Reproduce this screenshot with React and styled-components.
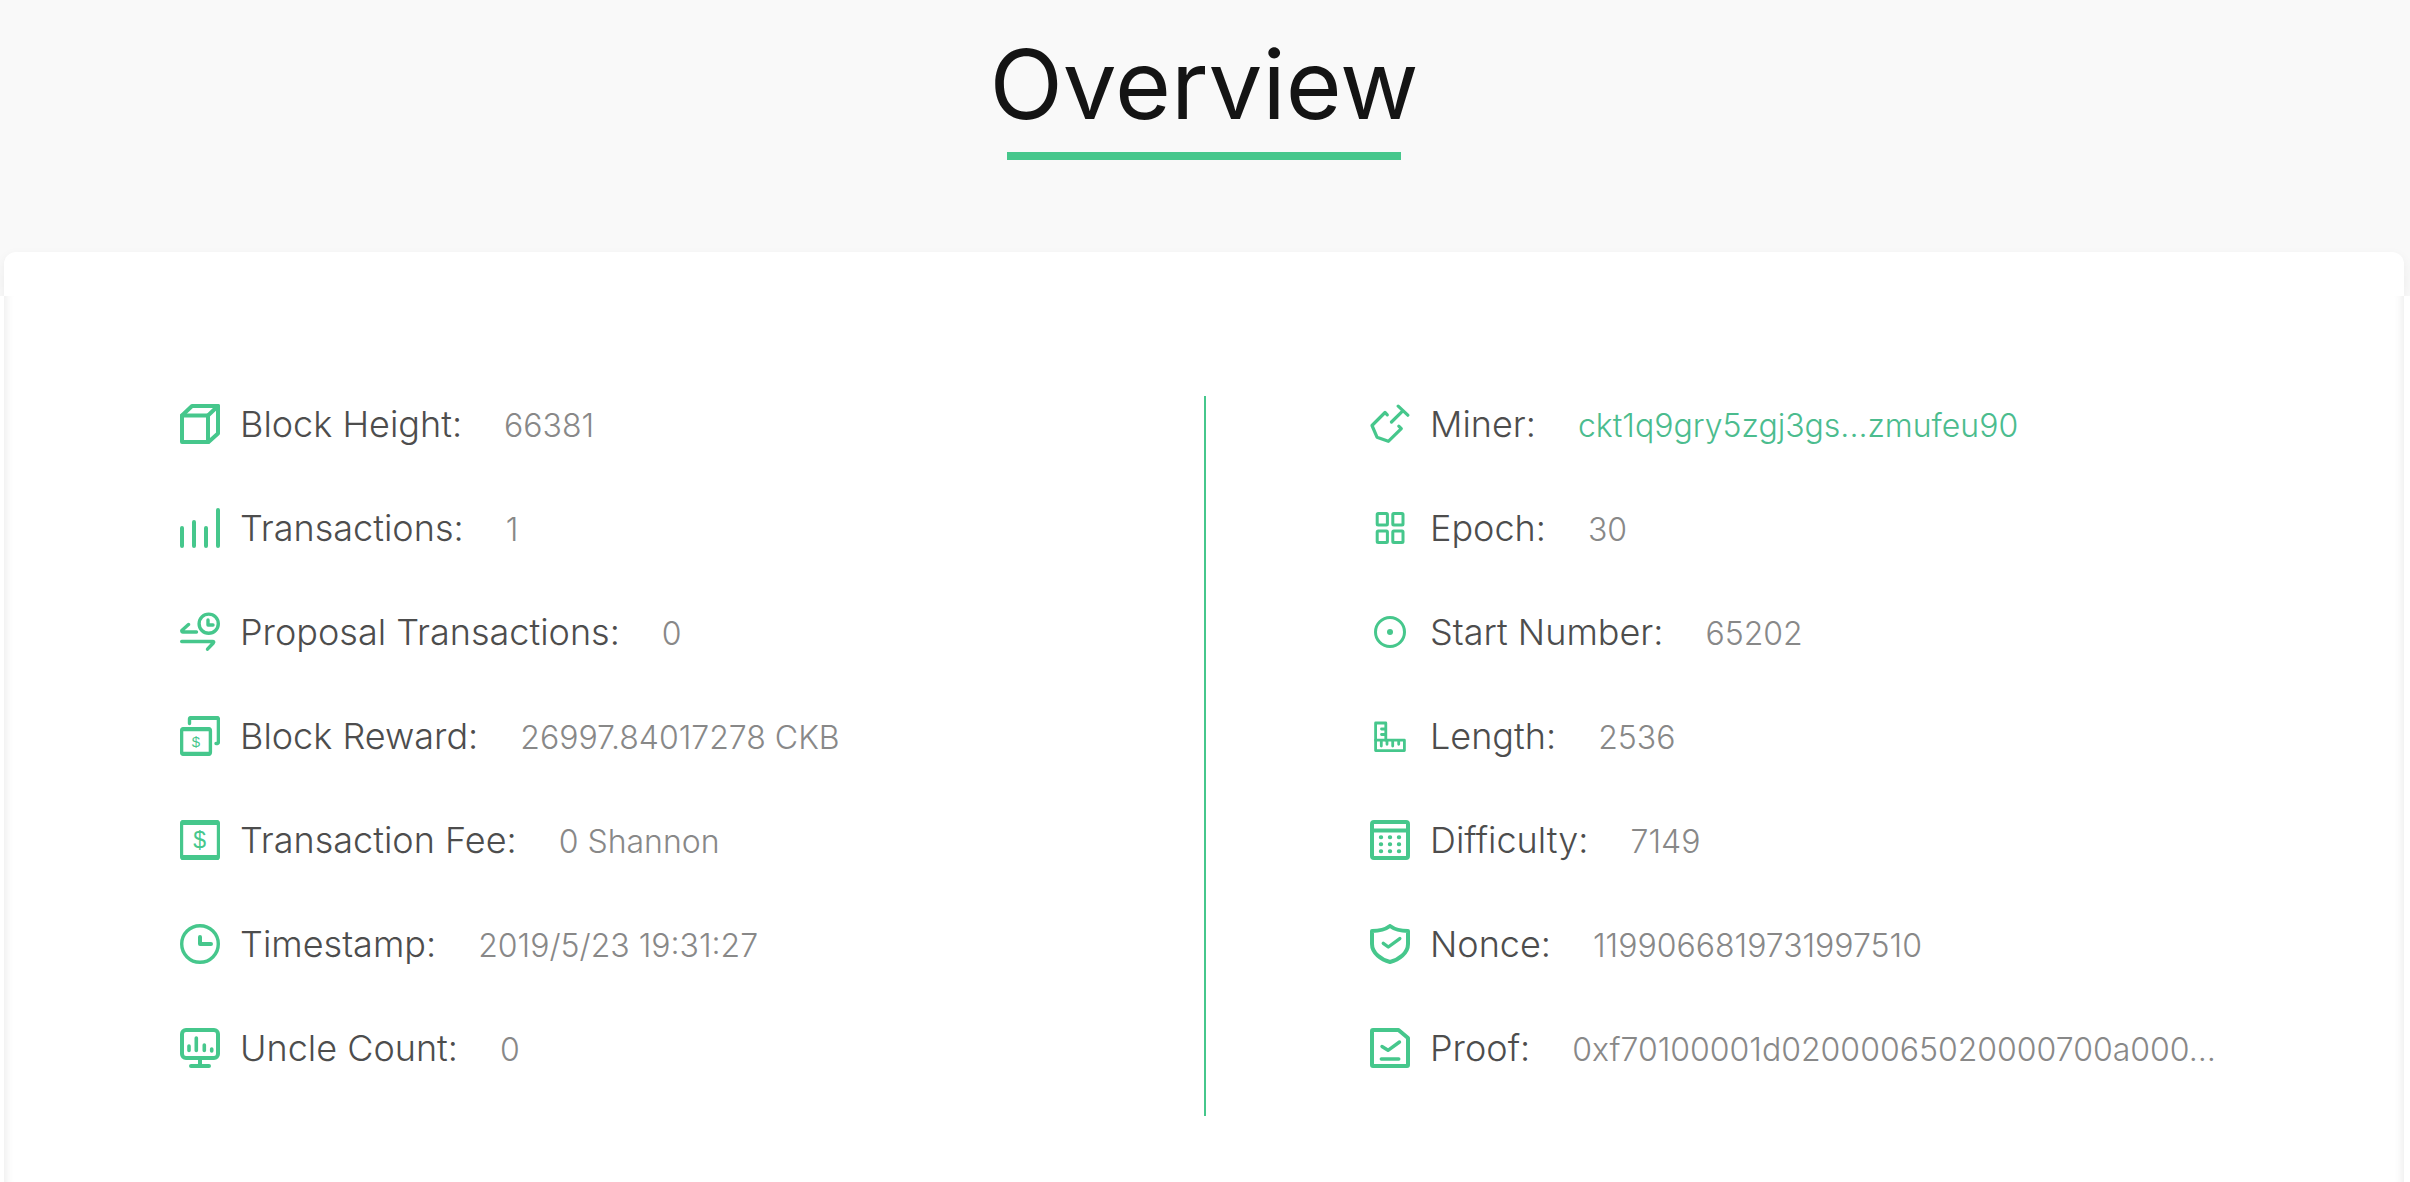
import styled, {createGlobalStyle} from 'styled-components';

const icons = {
  cube: (
    <>
      <path d="M2 11.5H28V38H2Z" />
      <path d="M2 11.5 12 2H38L28 11.5" />
      <path d="M38 2V29.5L28.5 38" />
    </>
  ),
  bars: <path d="M2 20V38M14 14V38M26 20V38M38 2V38" />,
  proposal: (
    <g strokeWidth="3.4">
      <circle cx="28.7" cy="11.7" r="9.6" />
      <path d="M28 8V13H33" />
      <path d="M8.5 12.5 1.8 18.5Q1.6 20 3 20H16.5" />
      <path d="M1.7 29.5H32.5Q34.5 29.5 33.3 31L27.5 37.2" />
    </g>
  ),
  reward: (
    <>
      <path d="M9.5 7.5V3Q9.5 1.8 11 1.8H37Q38.4 1.8 38.4 3V26Q38.4 27.5 36 27.5" strokeWidth="3.4" />
      <path d="M11 2H37" />
      <rect x="1.6" y="12.8" width="28.8" height="25.4" rx="2" strokeWidth="3.4" />
      <path d="M3 13.2H29M3 37.8H29" strokeWidth="4" />
      <IconText x="16" y="31" fontSize="15">$</IconText>
    </>
  ),
  fee: (
    <>
      <rect x="1.6" y="1.6" width="36.8" height="36.8" rx="2" strokeWidth="3.2" />
      <path d="M3 2.5H37M3 37.5H37" strokeWidth="5" />
      <IconText x="19.6" y="28" fontSize="23">$</IconText>
    </>
  ),
  clock: (
    <>
      <circle cx="20" cy="20" r="18.3" strokeWidth="3.4" />
      <path d="M20 13V20H31" />
    </>
  ),
  monitor: (
    <>
      <rect x="2" y="2" width="36" height="28" rx="4" />
      <path d="M9 18V22.5M16.3 10V22.5M24.3 17V22.5M31.7 21V23" strokeWidth="3.6" />
      <path d="M20 31V37M11 38H29" />
    </>
  ),
  miner: (
    <g strokeWidth="3.2">
      <path d="M17.3 10.8 15 8.5 2 21.5 7 33.2 18.3 37.3 31.3 24.6 28.8 22.2" />
      <path d="M21.5 18 32.8 6.8M28.2 2.2 37.8 11.2" />
    </g>
  ),
  grid: (
    <g strokeWidth="3">
      <rect x="7.2" y="5.5" width="10.2" height="11.4" rx="1" />
      <rect x="22.8" y="5.5" width="10.2" height="11.4" rx="1" />
      <rect x="7.2" y="23.1" width="10.2" height="11.4" rx="1" />
      <rect x="22.8" y="23.1" width="10.2" height="11.4" rx="1" />
    </g>
  ),
  target: (
    <>
      <circle cx="20" cy="20" r="14.5" strokeWidth="3" />
      <circle cx="20" cy="20" r="3" fill="currentColor" stroke="none" />
    </>
  ),
  ruler: (
    <g strokeWidth="2.8">
      <path d="M5.6 7H15.8V24.2H34.4V34.6H5.6Z" />
      <path d="M5.6 24.2H15.8M15 13H11.5M15 18.5H11.5" />
      <path d="M11.3 25V30M17 25V28.3M22.7 25V30M28.7 25V28.3" />
    </g>
  ),
  calculator: (
    <>
      <rect x="2" y="2" width="36" height="36" rx="2" />
      <path d="M3 10.5H37" />
      <path d="M10.8 17.2H11.2M19.8 17.2H20.2M28.8 17.2H29.2M10.8 24.2H11.2M19.8 24.2H20.2M28.8 24.2H29.2M10.8 31.2H11.2M19.8 31.2H20.2M28.8 31.2H29.2" />
    </>
  ),
  shield: (
    <>
      <path d="M20 2C15 5.7 9 7 2 7V20C2 29 11 35.8 20 38C29 35.8 38 29 38 20V7C31 7 25 5.7 20 2Z" />
      <path d="M13.3 19.3 18.3 23 29.8 14.6" strokeWidth="3.4" />
    </>
  ),
  proof: (
    <>
      <path d="M3 2H28.5L38 10V37Q38 38 37 38H3Q2 38 2 37V3Q2 2 3 2Z" />
      <path d="M12 18.5 18 22.3 29.5 14M11.3 31H28.8" strokeWidth="3.4" />
    </>
  ),
};

const leftItems = [
  {icon: 'cube', label: 'Block Height:', value: '66381'},
  {icon: 'bars', label: 'Transactions:', value: '1'},
  {icon: 'proposal', label: 'Proposal Transactions:', value: '0'},
  {icon: 'reward', label: 'Block Reward:', value: '26997.84017278 CKB'},
  {icon: 'fee', label: 'Transaction Fee:', value: '0 Shannon'},
  {icon: 'clock', label: 'Timestamp:', value: '2019/5/23 19:31:27'},
  {icon: 'monitor', label: 'Uncle Count:', value: '0'},
];

const rightItems = [
  {icon: 'miner', label: 'Miner:', value: 'ckt1q9gry5zgj3gs...zmufeu90', link: true},
  {icon: 'grid', label: 'Epoch:', value: '30'},
  {icon: 'target', label: 'Start Number:', value: '65202'},
  {icon: 'ruler', label: 'Length:', value: '2536'},
  {icon: 'calculator', label: 'Difficulty:', value: '7149'},
  {icon: 'shield', label: 'Nonce:', value: '1199066819731997510'},
  {icon: 'proof', label: 'Proof:', value: '0xf70100001d02000065020000700a000…'},
];

function Item({icon, label, value, link}) {
  return (
    <Row>
      <Icon viewBox="0 0 40 40" aria-hidden="true">
        {icons[icon]}
      </Icon>
      <Label>{label}</Label>
      <Value>{link ? <MinerLink href="#miner">{value}</MinerLink> : value}</Value>
    </Row>
  );
}

export default function App() {
  return (
    <>
      <GlobalStyle />
      <Header>
        <Title>Overview</Title>
        <Underline />
        <CardTop />
      </Header>
      <CardBody>
        <Column>
          {leftItems.map(item => (
            <Item key={item.label} {...item} />
          ))}
        </Column>
        <Column $divided>
          {rightItems.map(item => (
            <Item key={item.label} {...item} />
          ))}
        </Column>
      </CardBody>
    </>
  );
}

const GlobalStyle = createGlobalStyle`
  * {
    box-sizing: border-box;
  }

  body {
    margin: 0;
    background: #ffffff;
    font-family: Inter, 'Noto Sans', sans-serif;
    font-weight: 340;
  }
`;

const Header = styled.header`
  display: flex;
  flex-direction: column;
  align-items: center;
  padding: 24px 6px 0 4px;
  background: #f9f9f9;
  overflow: hidden;
`;

const Title = styled.h1`
  margin: 0;
  font-size: 96px;
  font-weight: 380;
  line-height: 120px;
  color: #141414;
`;

const Underline = styled.div`
  width: 394px;
  height: 8px;
  margin-top: 8px;
  background: #46c78c;
`;

const CardTop = styled.div`
  align-self: stretch;
  height: 44px;
  margin-top: 92px;
  border-radius: 12px 12px 0 0;
  background: #ffffff;
  box-shadow: 0 4px 12px rgba(0, 0, 0, 0.06);
`;

const CardBody = styled.main`
  display: grid;
  grid-template-columns: 1fr 1fr;
  min-height: calc(100vh - 296px);
  margin: 0 6px 0 4px;
  padding: 100px 0 66px;
  box-shadow: inset 10px 0 8px -8px rgba(0, 0, 0, 0.08),
    inset -10px 0 8px -8px rgba(0, 0, 0, 0.08);
`;

const Column = styled.dl`
  display: flex;
  flex-direction: column;
  gap: 48px;
  min-width: 0;
  margin: 0;
  padding: 0 40px 40px ${({$divided}) => ($divided ? '164px' : '176px')};
  border-left: ${({$divided}) => ($divided ? '2px solid #46c78c' : 'none')};
`;

const Row = styled.div`
  display: flex;
  align-items: baseline;
  height: 56px;
  white-space: nowrap;
`;

const Icon = styled.svg`
  flex: none;
  align-self: center;
  width: 40px;
  height: 40px;
  margin-right: 20px;
  color: #46c78c;
  fill: none;
  stroke: currentColor;
  stroke-width: 4;
  stroke-linecap: round;
  stroke-linejoin: round;
`;

function IconText(props) {
  return <Dollar textAnchor="middle" {...props} />;
}

const Dollar = styled.text`
  fill: currentColor;
  stroke: none;
  font-family: 'Liberation Sans Narrow', 'Liberation Sans', sans-serif;
  font-weight: 400;
`;

const Label = styled.dt`
  font-size: 36px;
  line-height: 56px;
  color: #4d4d4d;
`;

const Value = styled.dd`
  margin: 0 0 0 42px;
  font-size: 32px;
  line-height: 56px;
  color: #888888;
`;

const MinerLink = styled.a`
  color: #4bbc8e;
  text-decoration: none;
`;
